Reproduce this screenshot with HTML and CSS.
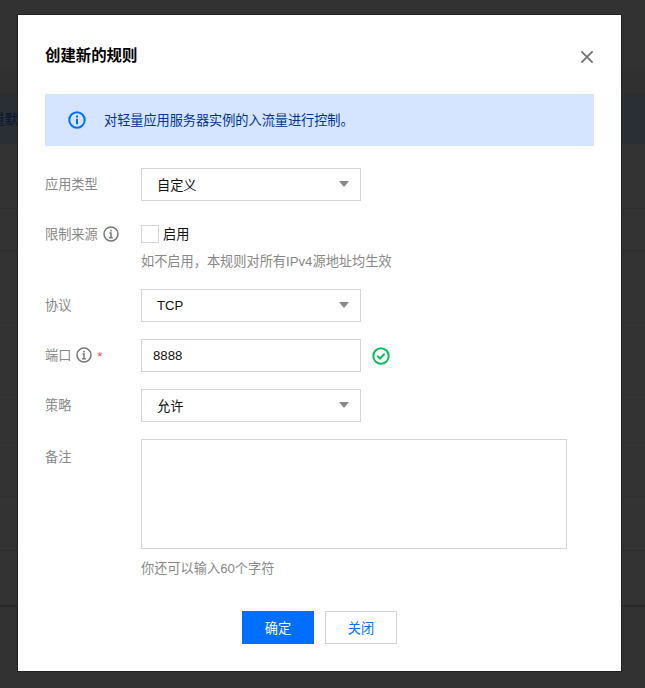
FILE: index.html
```
<!DOCTYPE html>
<html lang="zh-CN">
<head>
<meta charset="utf-8">
<title>创建新的规则</title>
<link rel="stylesheet" href="styles.css">
</head>
<body>
<div class="screen">
  <div class="backdrop">
    <div class="backdrop-top"></div>
    <div class="backdrop-head"></div>
    <div class="backdrop-notice"><span>量默</span></div>
    <div class="backdrop-row first"></div>
    <div class="backdrop-row header"></div>
    <div class="backdrop-row faint"></div>
    <div class="backdrop-row faint"></div>
    <div class="backdrop-row faint short"></div>
    <div class="backdrop-row faint medium"></div>
    <div class="backdrop-row medium"></div>
    <div class="backdrop-row last"></div>
  </div>
  <main class="dialog" role="dialog" aria-labelledby="title">
    <header class="dialog-head">
      <h1 id="title">创建新的规则</h1>
      <svg class="close" viewBox="0 0 14 14"><path d="M1.4 1.4 12.6 12.6M12.6 1.4 1.4 12.6"/></svg>
    </header>
    <div class="notice">
      <svg class="icon notice-icon" viewBox="0 0 18 18"><circle cx="9" cy="9" r="7.7"/><path d="M9 4.5V6.5M9 7.7V13.2"/></svg>
      <span>对轻量应用服务器实例的入流量进行控制。</span>
    </div>
    <div class="form">
      <div class="row">
        <div class="label">应用类型</div>
        <div class="control select"><span>自定义</span><i class="caret"></i></div>
      </div>
      <div class="row source">
        <div class="label">限制来源<svg class="icon info" viewBox="0 0 16 16"><circle cx="8" cy="8" r="7"/><path d="M8 3.8V5.5M6.5 7H8V11.5M6.2 11.8H9.8"/></svg></div>
        <div class="stack">
          <div class="check"><i class="box"></i><span>启用</span></div>
          <p class="hint">如不启用，本规则对所有<span class="latin">IPv4</span>源地址均生效</p>
        </div>
      </div>
      <div class="row">
        <div class="label">协议</div>
        <div class="control select latin"><span>TCP</span><i class="caret"></i></div>
      </div>
      <div class="row">
        <div class="label">端口<svg class="icon info" viewBox="0 0 16 16"><circle cx="8" cy="8" r="7"/><path d="M8 3.8V5.5M6.5 7H8V11.5M6.2 11.8H9.8"/></svg><span class="required">*</span></div>
        <div class="control input latin">8888</div>
        <svg class="icon success" viewBox="0 0 18 18"><circle cx="9" cy="9" r="7.7"/><path d="M5.2 8.8 8 11.5 12.6 6.8"/></svg>
      </div>
      <div class="row">
        <div class="label">策略</div>
        <div class="control select"><span>允许</span><i class="caret"></i></div>
      </div>
      <div class="row remark">
        <div class="label">备注</div>
        <div class="stack">
          <div class="textarea"></div>
          <p class="hint">你还可以输入<span class="latin">60</span>个字符</p>
        </div>
      </div>
    </div>
    <footer class="actions">
      <button class="button primary" type="button">确定</button>
      <button class="button" type="button">关闭</button>
    </footer>
  </main>
</div>
</body>
</html>
```
FILE: styles.css
```
* { box-sizing: border-box; }
body {
  margin: 0;
  overflow: hidden;
  background: #323232;
  color: #111;
  font: 13.2px/20px "Noto Sans CJK SC", sans-serif;
}
h1, p { margin: 0; }
.screen {
  display: grid;
  width: 645px;
  height: 688px;
}
.backdrop, .dialog { grid-area: 1 / 1; }
.backdrop-top { height: 68px; background: #323232; }
.backdrop-head { height: 26px; background: #303030; }
.backdrop-notice {
  display: flex;
  align-items: center;
  justify-content: flex-end;
  width: 645px;
  height: 50px;
  padding-right: 627px;
  padding-bottom: 1px;
  background: #2a2f35;
  color: #071432;
  white-space: nowrap;
}
.backdrop-row { height: 72px; background: #333; border-bottom: 1px solid #2d2d2d; }
.backdrop-row.first { height: 65px; }
.backdrop-row.header { height: 42px; }
.backdrop-row.faint { border-color: #303030; }
.backdrop-row.short { height: 48px; }
.backdrop-row.medium { height: 54px; }
.backdrop-row.last { height: 56px; border-bottom: 2px solid #292929; }
.dialog {
  width: 603px;
  height: 656px;
  margin: 15px 0 0 18px;
  padding: 0 27px;
  background: #fff;
  outline: 1px solid #222;
}
.dialog-head {
  display: flex;
  justify-content: space-between;
  height: 79px;
  padding-top: 28px;
}
h1 { color: #000; font-size: 15.4px; line-height: 22px; font-weight: 700; }
.close { width: 14px; height: 14px; margin-top: 7px; fill: none; stroke: #777; stroke-width: 2; }
.notice {
  display: flex;
  align-items: center;
  gap: 18px;
  width: 549px;
  height: 52px;
  padding-left: 23px;
  background: #d5e5ff;
  color: #003399;
}
.notice span { letter-spacing: -0.05px; }
.icon { flex: none; fill: none; stroke: currentColor; }
.notice-icon { width: 18px; height: 18px; stroke-width: 2; color: #006eff; }
.form { display: flex; flex-direction: column; gap: 17px; padding-top: 22px; }
.row { display: flex; height: 33px; align-items: center; }
.label { display: flex; align-items: center; width: 96px; padding-bottom: 1px; color: #888; }
.info { width: 16px; height: 16px; margin-left: 5px; stroke-width: 1.5; color: #777; }
.required { margin-left: 5px; color: #e54545; font: 12px/16px "Liberation Sans", sans-serif; padding-top: 3px; }
.control {
  display: flex;
  align-items: center;
  width: 220px;
  height: 33px;
  border: 1px solid #d2d4da;
}
.select { justify-content: space-between; padding: 1px 11px 0 15px; }
.input { padding-left: 11px; }
.latin { font-family: "Liberation Sans", sans-serif; }
.caret {
  width: 10px;
  height: 6px;
  margin-top: -2px;
  background: #888;
  clip-path: polygon(0 0, 100% 0, 50% 100%);
}
.source { height: 54px; align-items: flex-start; }
.source .label { height: 33px; }
.check { display: flex; align-items: center; gap: 4px; height: 32px; }
.box { width: 18px; height: 18px; border: 1px solid #d2d4da; }
.hint { color: #888; }
.source .hint { margin-top: 1px; }
.success { width: 18px; height: 18px; margin-left: 11px; color: #0abf5b; stroke-width: 2; }
.remark { height: 140px; align-items: flex-start; }
.remark .label { height: 36px; }
.textarea { width: 426px; height: 110px; border: 1px solid #d2d4da; }
.remark .hint { margin-top: 9px; }
.actions { display: flex; justify-content: center; gap: 11px; padding-top: 32px; }
.button {
  width: 72px;
  height: 33px;
  padding: 1px 0 0;
  border: 1px solid #d2d4da;
  background: #fff;
  color: #006eff;
  font: inherit;
}
.primary { border-color: #006eff; background: #006eff; color: #fff; }
```
